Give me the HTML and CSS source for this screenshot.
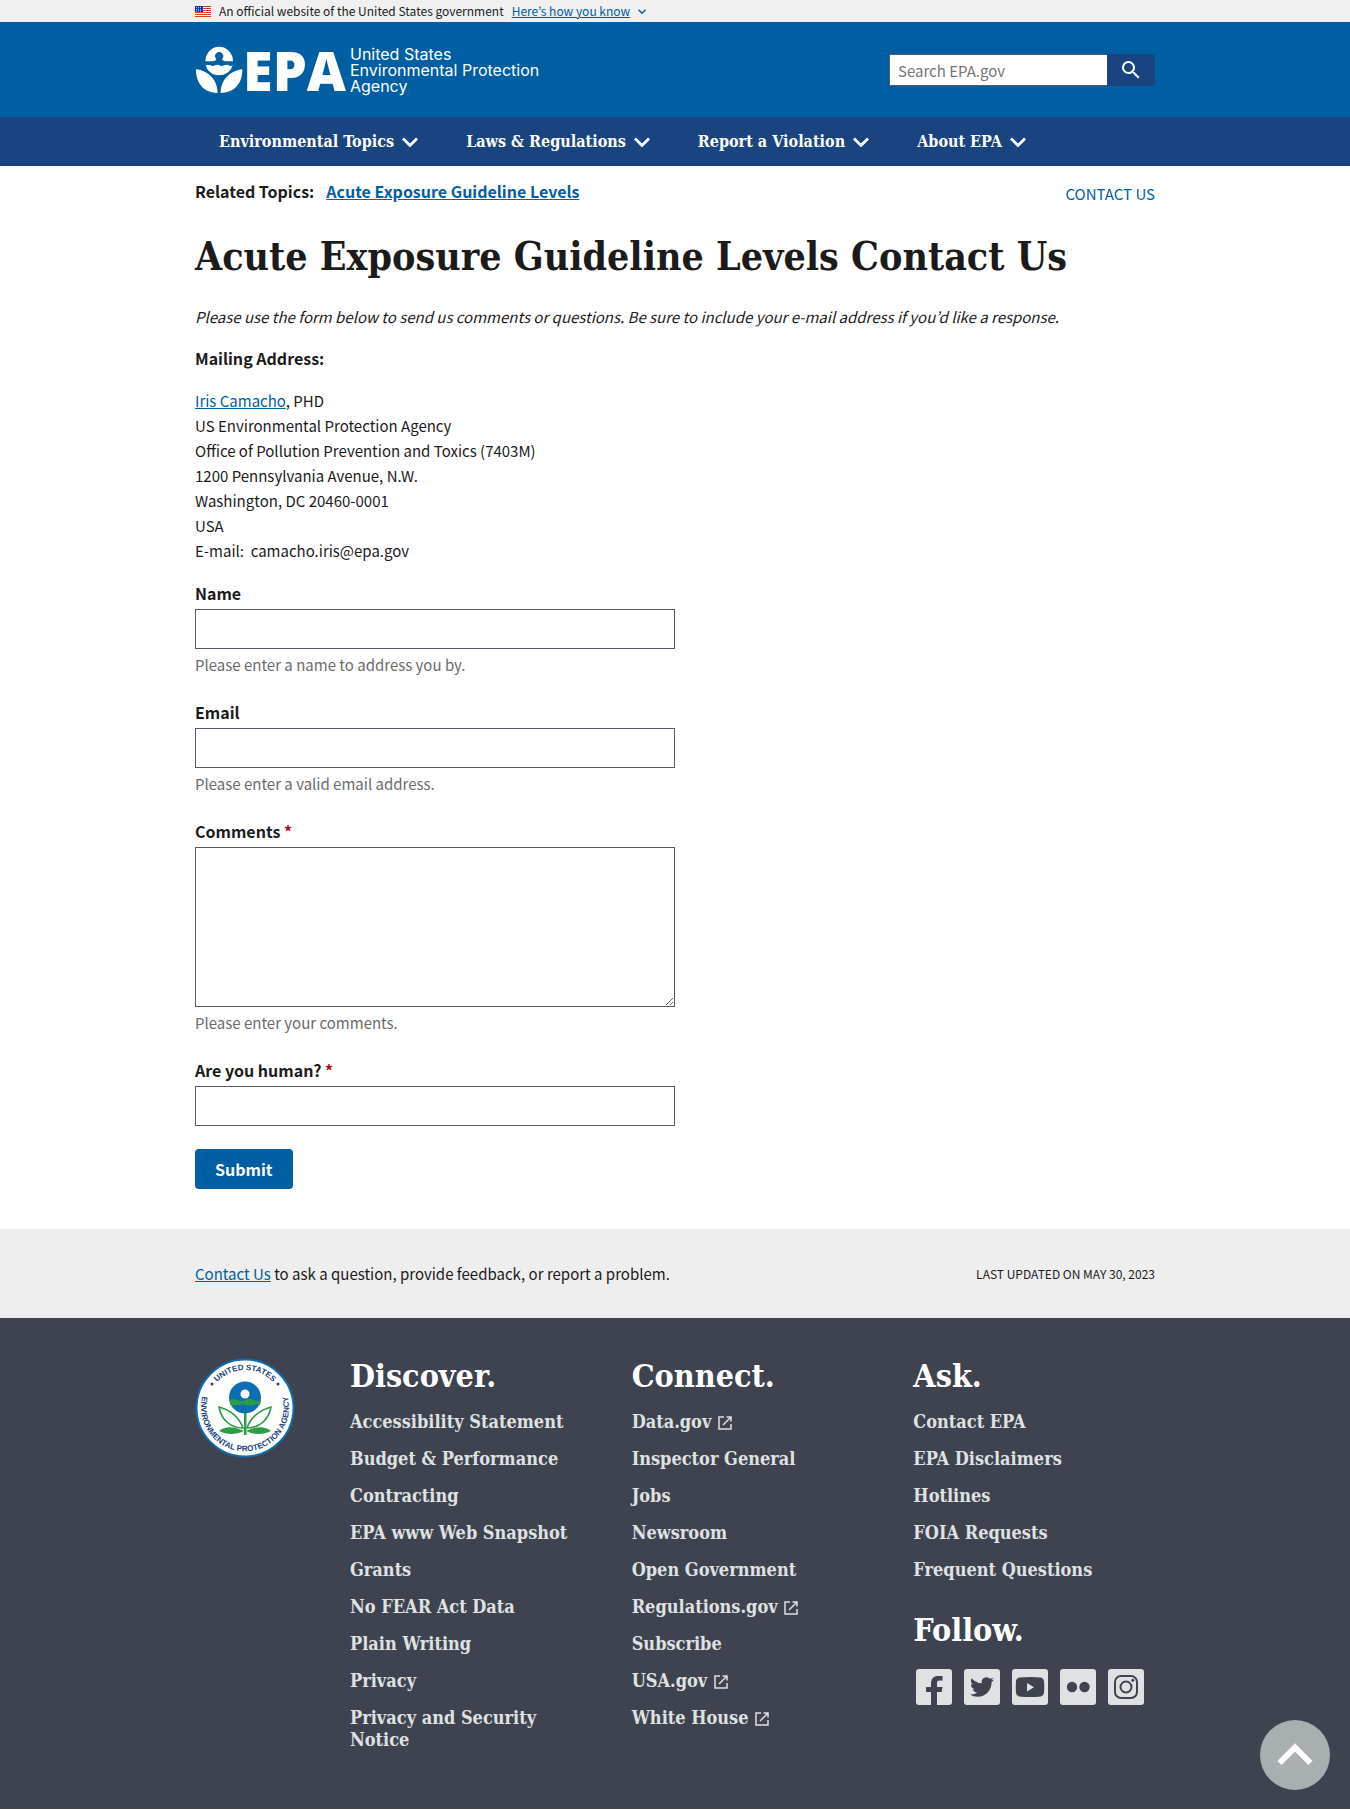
FILE: index.html
```html
<!DOCTYPE html>
<html lang="en">
<head>
<meta charset="utf-8">
<meta name="viewport" content="width=device-width, initial-scale=1">
<title>Acute Exposure Guideline Levels Contact Us | US EPA</title>
<link rel="stylesheet" href="styles.css">
</head>
<body>
<svg class="defs" aria-hidden="true" width="0" height="0">
  <symbol id="chevron" viewBox="0 0 16 10"><path d="M1 1.500L8 8.500L15 1.500" fill="none" stroke="currentColor" stroke-width="2.800"/></symbol>
  <symbol id="external" viewBox="0 0 16 16"><path d="M7 2H2v12h12V9M9.500 2H14v4.500M14 2L6 10" fill="none" stroke="currentColor" stroke-width="1.500"/></symbol>
</svg>

<div class="banner">
  <div class="container banner-row">
    <svg class="flag" viewBox="0 0 16 11" aria-hidden="true">
      <rect width="16" height="11" fill="#fff"/>
      <path d="M0 .5h16M0 2.500h16M0 4.500h16M0 6.500h16M0 8.500h16M0 10.500h16" stroke="#db3e1f" stroke-width="1"/>
      <rect width="8" height="6" fill="#1e33b1"/>
      <path d="M1 1.500h6M1 3.500h6M1 5h6" stroke="#fff" stroke-width=".7" stroke-dasharray="1 1"/>
    </svg>
    <span>An official website of the United States government</span>
    <a href="#">Here’s how you know</a>
    <svg class="banner-chevron" aria-hidden="true"><use href="#chevron"/></svg>
  </div>
</div>

<header class="header">
  <div class="container header-row">
    <a class="logo" href="#">
      <svg class="logo-flower" viewBox="25 45 144 144" aria-hidden="true">
        <path fill="#fff" fill-rule="evenodd" d="M56 91A41 43 0 0 1 139 91H117C111 90 107 88 106 84A12 12 0 1 0 89 84C88 88 84 90 78 91Z"/>
        <path fill="#fff" d="M57 103Q64 99 71 103T85 103T98 103T112 103T126 103T138 103C132 123 116 133 97 133C79 133 63 123 57 103Z"/>
        <path fill="#fff" d="M28 115C62 119 92 143 93 186C55 186 27 160 28 115ZM167 115C133 119 103 143 102 186C140 186 168 160 167 115Z"/>
      </svg>
      <span class="logo-name">EPA</span>
      <span class="logo-tag">United States<br>Environmental Protection<br>Agency</span>
    </a>
    <form class="search" role="search">
      <input class="search-input" type="search" placeholder="Search EPA.gov" aria-label="Search">
      <button class="search-button" type="button" aria-label="Search">
        <svg viewBox="0 0 24 24" width="24" height="24" aria-hidden="true"><path fill="#fff" d="M15.500 14h-.79l-.28-.27A6.470 6.470 0 0 0 16 9.500 6.500 6.500 0 1 0 9.500 16c1.610 0 3.090-.59 4.230-1.570l.27.28v.79l5 4.990L20.490 19l-4.990-5zm-6 0C7.010 14 5 11.990 5 9.500S7.010 5 9.500 5 14 7.010 14 9.500 11.990 14 9.500 14z"/></svg>
      </button>
    </form>
  </div>
</header>

<nav class="nav" aria-label="Main">
  <div class="container nav-row">
    <button class="nav-item" type="button">Environmental Topics <svg aria-hidden="true"><use href="#chevron"/></svg></button>
    <button class="nav-item" type="button">Laws &amp; Regulations <svg aria-hidden="true"><use href="#chevron"/></svg></button>
    <button class="nav-item" type="button">Report a Violation <svg aria-hidden="true"><use href="#chevron"/></svg></button>
    <button class="nav-item" type="button">About EPA <svg aria-hidden="true"><use href="#chevron"/></svg></button>
  </div>
</nav>

<main class="container main">
  <div class="related">
    <div class="related-topics"><span>Related Topics:</span><a href="#">Acute Exposure Guideline Levels</a></div>
    <a class="contact" href="#">CONTACT US</a>
  </div>
  <h1>Acute Exposure Guideline Levels Contact Us</h1>
  <p><em>Please use the form below to send us comments or questions. Be sure to include your e-mail address if you’d like a response.</em></p>
  <p><strong>Mailing Address:</strong></p>
  <address><a href="#">Iris Camacho</a>, PHD<br>
    US Environmental Protection Agency<br>
    Office of Pollution Prevention and Toxics (7403M)<br>
    1200 Pennsylvania Avenue, N.W.<br>
    Washington, DC 20460-0001<br>
    USA<br>
    E-mail:&nbsp; camacho.iris@epa.gov</address>
  <form class="form">
    <div class="field">
      <label for="name">Name</label>
      <input id="name" type="text" aria-describedby="name-hint">
      <div class="hint" id="name-hint">Please enter a name to address you by.</div>
    </div>
    <div class="field">
      <label for="email">Email</label>
      <input id="email" type="email" aria-describedby="email-hint">
      <div class="hint" id="email-hint">Please enter a valid email address.</div>
    </div>
    <div class="field">
      <label for="comments">Comments <span class="required">*</span></label>
      <textarea id="comments" aria-describedby="comments-hint"></textarea>
      <div class="hint" id="comments-hint">Please enter your comments.</div>
    </div>
    <div class="field">
      <label for="human">Are you human? <span class="required">*</span></label>
      <input id="human" type="text">
    </div>
    <button class="submit" type="button">Submit</button>
  </form>
</main>

<div class="feedback">
  <div class="container feedback-row">
    <div><a href="#">Contact Us</a> to ask a question, provide feedback, or report a problem.</div>
    <div class="updated">LAST UPDATED ON MAY 30, 2023</div>
  </div>
</div>

<footer class="footer">
  <div class="container footer-grid">
    <svg class="seal" viewBox="0 0 100 100" role="img" aria-label="United States Environmental Protection Agency seal">
      <defs>
        <path id="seal-top" d="M12 50A38 38 0 0 1 88 50"/>
        <path id="seal-bottom" d="M19 18A44 44 0 1 0 81 18"/>
      </defs>
      <circle cx="50" cy="50" r="48.500" fill="#fff" stroke="#0f6cb0" stroke-width="2"/>
      <text class="seal-text"><textPath href="#seal-top" startOffset="50%" text-anchor="middle">UNITED STATES</textPath></text>
      <text class="seal-text"><textPath href="#seal-bottom" startOffset="50%" text-anchor="middle">ENVIRONMENTAL PROTECTION AGENCY</textPath></text>
      <circle cx="17" cy="26" r="1.500" fill="#1a4480"/><circle cx="83" cy="26" r="1.500" fill="#1a4480"/>
      <circle cx="50" cy="39.500" r="16" fill="#0e6eb5"/>
      <path d="M34.500 42q4-2 8 0t8 0t8 0t7.500 0l-1 5q-3-1-7 0t-7 0t-8 0t-7.500 0z" fill="#2e9b47"/>
      <circle cx="50" cy="36" r="4.500" fill="#fff"/>
      <path d="M49 55h2.500v22H49z" fill="#2e9b47"/>
      <path d="M24 49C35 52 44 59 48 70C35 70 26 61 24 49ZM76 49C65 52 56 59 52 70C65 70 74 61 76 49Z" fill="#fff" stroke="#2e9b47" stroke-width="1.600"/>
      <path d="M24 73C31 67 40 69 49 73C41 77 32 77 24 73ZM76 73C69 67 60 69 51 73C59 77 68 77 76 73Z" fill="#2e9b47"/>
    </svg>
    <section>
      <h2>Discover.</h2>
      <ul>
        <li><a href="#">Accessibility Statement</a></li>
        <li><a href="#">Budget &amp; Performance</a></li>
        <li><a href="#">Contracting</a></li>
        <li><a href="#">EPA www Web Snapshot</a></li>
        <li><a href="#">Grants</a></li>
        <li><a href="#">No FEAR Act Data</a></li>
        <li><a href="#">Plain Writing</a></li>
        <li><a href="#">Privacy</a></li>
        <li><a href="#">Privacy and Security Notice</a></li>
      </ul>
    </section>
    <section>
      <h2>Connect.</h2>
      <ul>
        <li><a href="#">Data.gov <svg aria-hidden="true"><use href="#external"/></svg></a></li>
        <li><a href="#">Inspector General</a></li>
        <li><a href="#">Jobs</a></li>
        <li><a href="#">Newsroom</a></li>
        <li><a href="#">Open Government</a></li>
        <li><a href="#">Regulations.gov <svg aria-hidden="true"><use href="#external"/></svg></a></li>
        <li><a href="#">Subscribe</a></li>
        <li><a href="#">USA.gov <svg aria-hidden="true"><use href="#external"/></svg></a></li>
        <li><a href="#">White House <svg aria-hidden="true"><use href="#external"/></svg></a></li>
      </ul>
    </section>
    <section>
      <h2>Ask.</h2>
      <ul>
        <li><a href="#">Contact EPA</a></li>
        <li><a href="#">EPA Disclaimers</a></li>
        <li><a href="#">Hotlines</a></li>
        <li><a href="#">FOIA Requests</a></li>
        <li><a href="#">Frequent Questions</a></li>
      </ul>
      <h2 class="follow">Follow.</h2>
      <div class="social">
        <a href="#" aria-label="Facebook"><svg viewBox="0 0 36 36"><path d="M15 36V23H10v-5h5v-3.500C15 9.500 18 7 22 7h4.500v4.500H23.500C21.500 11.500 21 12.500 21 14v4h5.500l-.8 5H21v13z"/></svg></a>
        <a href="#" aria-label="Twitter"><svg viewBox="0 0 36 36"><g transform="translate(6 6)"><path d="M23.950 4.570a10 10 0 0 1-2.820.77 4.960 4.960 0 0 0 2.160-2.720c-.95.55-2 .96-3.130 1.180a4.920 4.920 0 0 0-8.380 4.480C7.690 8.100 4.070 6.130 1.640 3.160a4.820 4.820 0 0 0-.67 2.480c0 1.710.87 3.210 2.190 4.100a4.900 4.900 0 0 1-2.230-.62v.06a4.920 4.920 0 0 0 3.950 4.830 5 5 0 0 1-2.210.08 4.940 4.940 0 0 0 4.600 3.420A9.870 9.870 0 0 1 0 19.540a13.990 13.990 0 0 0 7.550 2.210c9.050 0 14-7.500 14-13.980 0-.21 0-.42-.02-.63a9.940 9.940 0 0 0 2.460-2.550z"/></g></svg></a>
        <a href="#" aria-label="YouTube"><svg viewBox="0 0 36 36"><path fill-rule="evenodd" d="M7 8.500Q18 7.500 29 8.500Q31.500 9 32 12Q32.500 18 32 24Q31.500 27 29 27.500Q18 28.500 7 27.500Q4.500 27 4 24Q3.500 18 4 12Q4.500 9 7 8.500ZM15 14v8.500l7-4.200z"/></svg></a>
        <a href="#" aria-label="Flickr"><svg viewBox="0 0 36 36"><circle cx="12" cy="18" r="5.200"/><circle cx="24.500" cy="18" r="5.200"/></svg></a>
        <a href="#" aria-label="Instagram"><svg viewBox="0 0 36 36"><g class="line"><rect x="7" y="7" width="22" height="22" rx="6"/><circle cx="18" cy="18" r="5.500"/></g><circle cx="24.800" cy="11.200" r="1.500"/></svg></a>
      </div>
    </section>
  </div>
</footer>
<a class="to-top" href="#" aria-label="Back to top"><svg viewBox="0 0 36 24" width="36" height="24"><path d="M2.500 20L18 4.500L33.500 20" fill="none" stroke="#fff" stroke-width="6"/></svg></a>
</body>
</html>
```
FILE: styles.css
```css
* { box-sizing: border-box; }

body {
  margin: 0;
  background: #fff;
  color: #1b1b1b;
  font-family: "Noto Sans CJK KR", "Open Sans", sans-serif;
  font-size: 15px;
  line-height: 25px;
}

a { color: #005ea2; }
button, input, textarea { font: inherit; }
.defs { position: absolute; }

.container {
  max-width: 960px;
  margin: 0 auto;
}

/* Government banner */
.banner {
  background: #f0f0f0;
  font-size: 12px;
  line-height: 22px;
}
.banner-row { display: flex; align-items: center; gap: 8px; }
.flag { width: 16px; height: 11px; }
.banner-chevron { width: 8px; height: 5px; color: #005ea2; }

/* Header */
.header { background: #005ea2; padding: 24px 0 23px; }
.header-row {
  display: flex;
  justify-content: space-between;
  align-items: flex-start;
}
.logo {
  display: flex;
  align-items: center;
  color: #fff;
  text-decoration: none;
}
.logo-flower { width: 48px; height: 48px; }
.logo-name {
  padding-right: 4px;
  font-family: "Open Sans", sans-serif;
  font-weight: 800;
  font-size: 54px;
  line-height: 48px;
}
.logo-tag {
  font-family: Inter, "Liberation Sans", sans-serif;
  font-size: 16px;
  line-height: 16px;
}
.search { display: flex; padding-top: 8px; }
.search-input {
  width: 218px;
  height: 32px;
  padding: 0 8px;
  border: 1px solid #565c65;
  border-right: 0;
  border-radius: 0;
  background: #fff;
  appearance: none;
}
.search-input::placeholder { color: #757575; }
.search-button {
  display: flex;
  align-items: center;
  justify-content: center;
  width: 48px;
  height: 32px;
  padding: 0;
  border: 0;
  border-radius: 0 4px 4px 0;
  background: #1a4480;
}

/* Main navigation */
.nav { background: #1a4480; }
.nav-row { display: flex; gap: 48px; padding: 12px 24px; }
.nav-item {
  display: flex;
  align-items: center;
  gap: 8px;
  padding: 0;
  border: 0;
  background: none;
  color: #fff;
  font-family: "DejaVu Serif Condensed", "DejaVu Serif", serif;
  font-weight: 700;
  font-size: 16px;
  line-height: 25px;
  white-space: nowrap;
}
.nav-item svg { width: 16px; height: 10px; }

/* Page content */
.main { padding: 13px 0 40px; }
.related { display: flex; justify-content: space-between; align-items: flex-start; }
.related-topics { display: flex; gap: 12px; font-size: 16px; font-weight: 700; }
.contact { padding-top: 2px; text-decoration: none; }
h1, h2 {
  margin: 0;
  font-family: "DejaVu Serif Condensed", "DejaVu Serif", serif;
  font-weight: 700;
}
h1 { margin: 26px 0 24px; font-size: 39px; line-height: 48px; }
p { margin: 0 0 17px; }
strong { font-size: 16px; }
address { font-style: normal; }

.form { max-width: 480px; padding-top: 18px; }
.field {
  display: flex;
  flex-direction: column;
  gap: 4px;
  margin-bottom: 23px;
  line-height: 24px;
}
.field label { font-size: 16px; font-weight: 700; }
.field input, .field textarea {
  width: 100%;
  height: 40px;
  padding: 8px;
  border: 1px solid #565c65;
  border-radius: 0;
  background: #fff;
}
.field textarea { height: 160px; resize: vertical; }
.hint { color: #6b6b6b; }
.required { color: #b50909; }
.submit {
  height: 40px;
  padding: 0 20px;
  border: 0;
  border-radius: 4px;
  background: #005ea2;
  color: #fff;
  font-size: 16px;
  font-weight: 700;
}

/* Feedback strip */
.feedback { background: #eee; padding: 32px 0; }
.feedback-row { display: flex; justify-content: space-between; }
.updated { font-size: 12px; }

/* Footer */
.footer { background: #3e434f; padding: 38px 0 58px; }
.footer-grid {
  display: grid;
  grid-template-columns: 115px repeat(3, 1fr);
  gap: 40px;
}
.seal { width: 100px; height: 100px; margin-top: 2px; }
.seal-text {
  font-family: "Liberation Sans", sans-serif;
  font-weight: 700;
  font-size: 8px;
  fill: #1a4480;
}
.footer h2 { color: #fff; font-size: 32px; line-height: 40px; }
.footer ul { margin: 0; padding: 0; list-style: none; }
.footer li {
  margin-top: 15px;
  font-family: "DejaVu Serif Condensed", "DejaVu Serif", serif;
  font-weight: 700;
  font-size: 18px;
  line-height: 22px;
}
.footer li a { color: #dfe1e2; text-decoration: none; }
.footer li svg { width: 16px; height: 16px; vertical-align: -3px; }
.footer .follow { margin-top: 29px; }
.social { display: flex; gap: 12px; padding: 19px 3px 0; }
.social a {
  width: 36px;
  height: 36px;
  border-radius: 3px;
  background: #dfe1e2;
}
.social svg { display: block; fill: #3e434f; }
.social .line { fill: none; stroke: #3e434f; stroke-width: 2; }

.to-top {
  position: fixed;
  right: 20px;
  bottom: 20px;
  display: flex;
  align-items: center;
  justify-content: center;
  width: 70px;
  height: 70px;
  border-radius: 50%;
  background: #a9aeb1;
}
```
